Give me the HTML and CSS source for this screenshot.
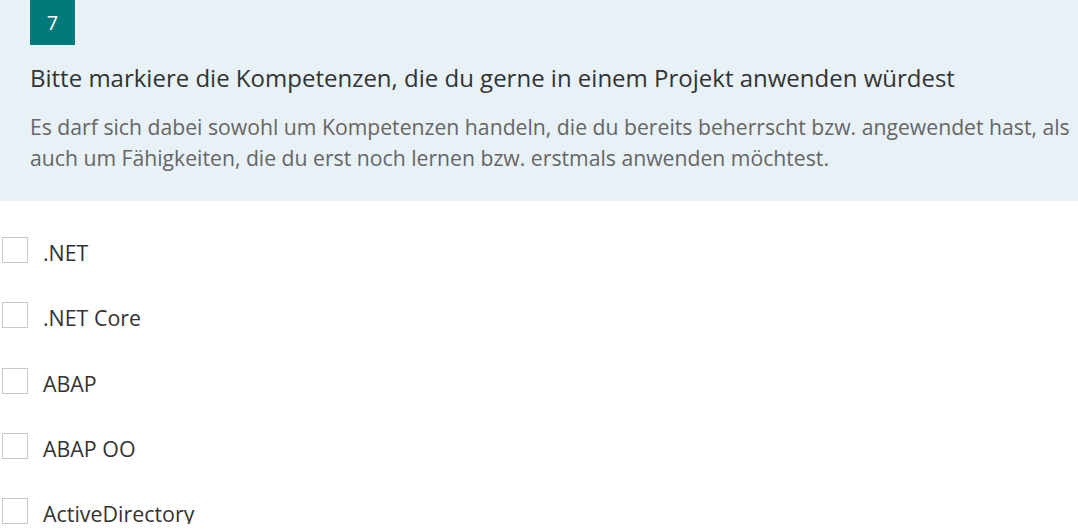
FILE: index.html
```html
<!DOCTYPE html>
<html lang="de">
<head>
<meta charset="utf-8">
<link rel="stylesheet" href="styles.css">
</head>
<body>
<div class="question-head">
  <div class="qnum">7</div>
  <div class="qtitle">Bitte markiere die Kompetenzen, die du gerne in einem Projekt anwenden würdest</div>
  <div class="qdesc">Es darf sich dabei sowohl um Kompetenzen handeln, die du bereits beherrscht bzw. angewendet hast, als auch um Fähigkeiten, die du erst noch lernen bzw. erstmals anwenden möchtest.</div>
</div>
<div class="options">
  <label class="opt"><span class="box"></span><span class="lbl">.NET</span></label>
  <label class="opt"><span class="box"></span><span class="lbl">.NET Core</span></label>
  <label class="opt"><span class="box"></span><span class="lbl">ABAP</span></label>
  <label class="opt"><span class="box"></span><span class="lbl">ABAP OO</span></label>
  <label class="opt"><span class="box"></span><span class="lbl">ActiveDirectory</span></label>
</div>
</body>
</html>
```
FILE: styles.css
```css
html, body {
  margin: 0;
  padding: 0;
  background: #ffffff;
  font-family: "Open Sans", "Noto Sans", sans-serif;
  overflow: hidden;
}
.question-head {
  background: #e8f1f5;
  padding: 0 6px 0 30px;
  height: 201px;
  box-sizing: border-box;
}
.qnum {
  width: 45px;
  height: 45px;
  background: #007a7a;
  color: #ffffff;
  font-size: 20px;
  display: flex;
  align-items: center;
  justify-content: center;
}
.qtitle {
  margin-top: 17px;
  font-size: 24px;
  line-height: 32px;
  color: #333333;
}
.qdesc {
  margin-top: 17px;
  font-size: 21.2px;
  line-height: 31px;
  color: #666666;
}
.options {
  display: flex;
  flex-direction: column;
  padding-top: 36px;
  gap: 39.25px;
}
.opt {
  display: flex;
  align-items: center;
  height: 26px;
  padding-left: 2px;
  gap: 15px;
}
.box {
  width: 26px;
  height: 26px;
  box-sizing: border-box;
  border: 1px solid #c8c8c8;
  background: #ffffff;
}
.lbl {
  font-size: 21.4px;
  line-height: 26px;
  padding-top: 6px;
  color: #333333;
}
```
